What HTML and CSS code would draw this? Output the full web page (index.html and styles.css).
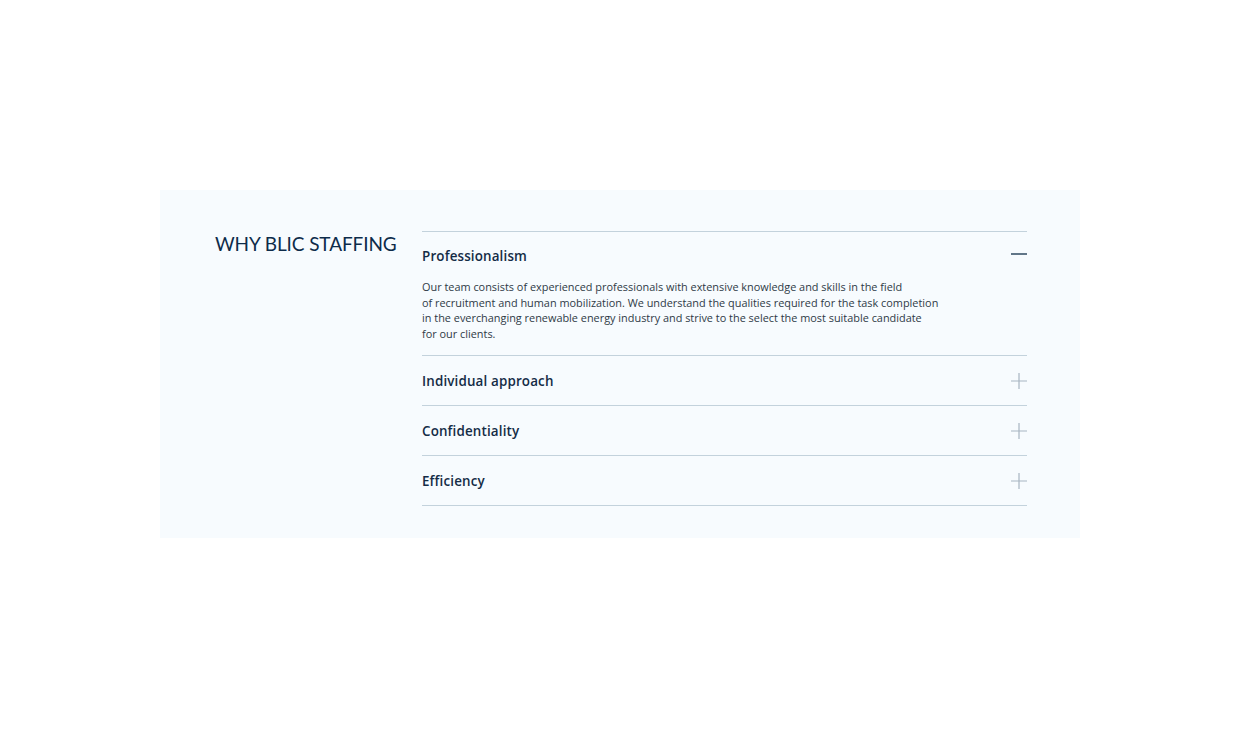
FILE: index.html
```html
<!DOCTYPE html>
<html lang="en">
<head>
<meta charset="utf-8">
<title>Why Blic Staffing</title>
<link rel="stylesheet" href="styles.css">
</head>
<body>
<section class="why">
  <h2 class="why-title">WHY BLIC STAFFING</h2>
  <div class="accordion">
    <div class="item open">
      <div class="item-head">
        <span class="item-name">Professionalism</span>
        <svg class="icon" width="16" height="16" viewBox="0 0 16 16"><line x1="0" y1="8" x2="16" y2="8" stroke="#2f4a60" stroke-width="1.5"/></svg>
      </div>
      <p class="item-body">Our team consists of experienced professionals with extensive knowledge and skills in the field<br>of recruitment and human mobilization. We understand the qualities required for the task completion<br>in the everchanging renewable energy industry and strive to the select the most suitable candidate<br>for our clients.</p>
    </div>
    <div class="item">
      <div class="item-head">
        <span class="item-name">Individual approach</span>
        <svg class="icon" width="16" height="16" viewBox="0 0 16 16"><path d="M0 8H16M8 0V16" stroke="#a7b5c1" stroke-width="1.2" fill="none"/></svg>
      </div>
    </div>
    <div class="item">
      <div class="item-head">
        <span class="item-name">Confidentiality</span>
        <svg class="icon" width="16" height="16" viewBox="0 0 16 16"><path d="M0 8H16M8 0V16" stroke="#a7b5c1" stroke-width="1.2" fill="none"/></svg>
      </div>
    </div>
    <div class="item">
      <div class="item-head">
        <span class="item-name">Efficiency</span>
        <svg class="icon" width="16" height="16" viewBox="0 0 16 16"><path d="M0 8H16M8 0V16" stroke="#a7b5c1" stroke-width="1.2" fill="none"/></svg>
      </div>
    </div>
  </div>
</section>
</body>
</html>
```
FILE: styles.css
```css
html, body {
  margin: 0;
  padding: 0;
  background: #ffffff;
}
body {
  padding-top: 190px;
  font-family: "Open Sans", "Noto Sans", sans-serif;
  color: #0e2a47;
}
.why {
  margin-left: 160px;
  width: 920px;
  box-sizing: border-box;
  background: #f7fbfe;
  padding: 41px 53px 32px 55px;
  display: flex;
  align-items: flex-start;
}
.why-title {
  margin: 1px 0 0 0;
  width: 207px;
  flex: none;
  font-family: "Lato", sans-serif;
  font-weight: 400;
  font-size: 19px;
  line-height: 24px;
  color: #0d2b4a;
  letter-spacing: -0.1px;
}
.accordion {
  flex: 1;
  border-top: 1px solid #c3d2dc;
}
.item {
  border-bottom: 1px solid #c3d2dc;
}
.item-head {
  height: 49px;
  display: flex;
  align-items: center;
  justify-content: space-between;
}
.item.open .item-head {
  height: 47px;
  align-items: flex-end;
}
.item.open .item-head .item-name {
  margin-bottom: 14px;
}
.item.open .item-head .icon {
  margin-bottom: 17px;
}
.item-name {
  font-size: 13.4px;
  font-weight: 600;
  letter-spacing: 0.15px;
  color: #142c46;
}
.icon {
  display: block;
  flex: none;
}
.item-body {
  margin: 0;
  padding: 0 0 14px 0;
  font-size: 10.9px;
  line-height: 15.5px;
  color: #2e3a46;
}
```
